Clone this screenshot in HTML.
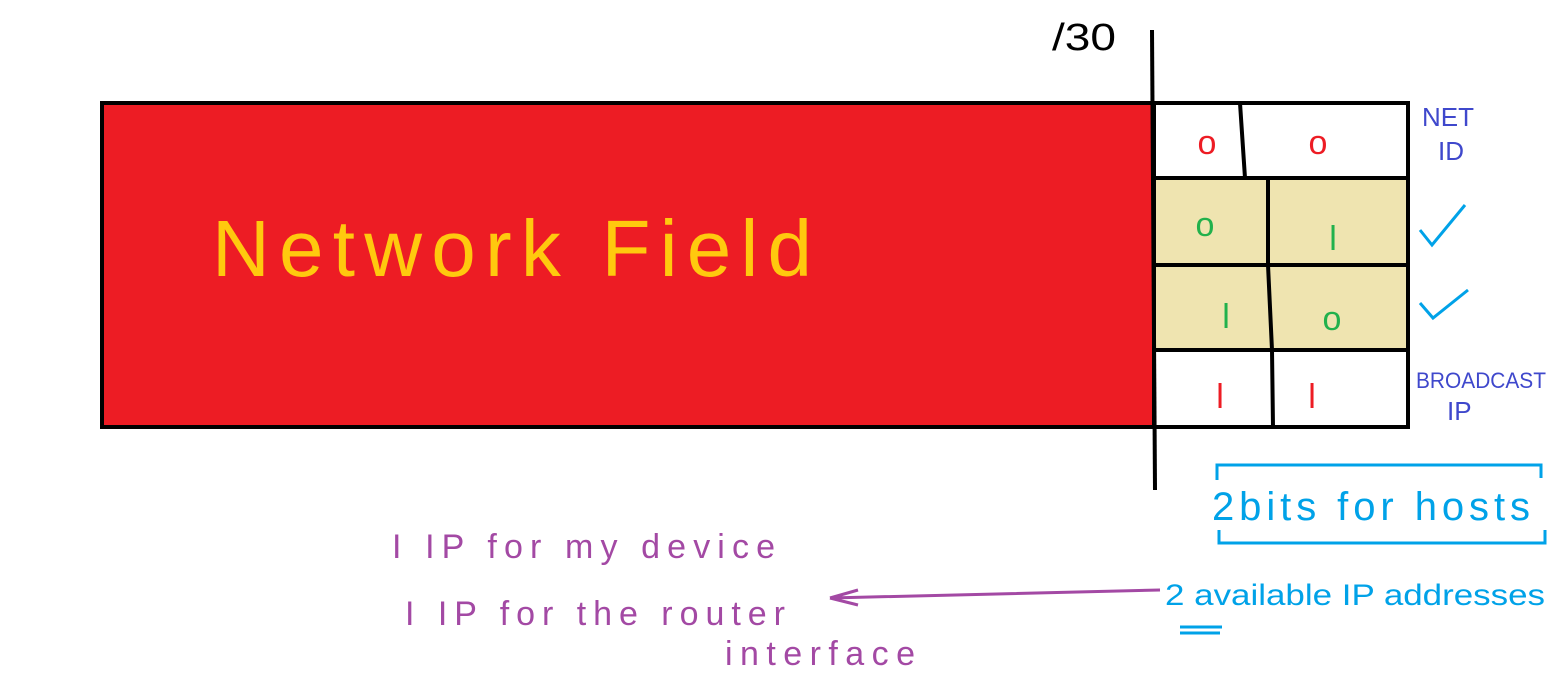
<!DOCTYPE html>
<html><head><meta charset="utf-8"><style>
html,body{margin:0;padding:0;background:#fff;width:1567px;height:691px;overflow:hidden}
svg{display:block}
text{font-family:"Liberation Sans",sans-serif}
</style></head><body>
<svg width="1567" height="691" viewBox="0 0 1567 691" xmlns="http://www.w3.org/2000/svg">
<rect x="102" y="103" width="1052" height="324" fill="#ed1c24" stroke="#000" stroke-width="4"/>
<rect x="1154" y="178" width="254" height="172" fill="#efe4b0"/>
<rect x="1154" y="103" width="254" height="324" fill="none" stroke="#000" stroke-width="4"/>
<path d="M1154 178 H1408 M1154 265 H1408 M1154 350 H1408 M1240 103 L1245 178 M1268 178 L1268 265 L1272 350 L1273 427" stroke="#000" stroke-width="4" fill="none"/>
<path d="M1152 30 L1155 490" stroke="#000" stroke-width="4"/>
<text x="1052" y="50" font-size="38" fill="#000" textLength="64" lengthAdjust="spacingAndGlyphs">/30</text>
<text x="212" y="276" font-size="80" fill="#ffc90e" textLength="600" lengthAdjust="spacing">Network Field</text>
<g font-size="34" text-anchor="middle">
<text x="1207" y="154" fill="#ed1c24">o</text>
<text x="1318" y="154" fill="#ed1c24">o</text>
<text x="1205" y="236" fill="#22b14c">o</text>
<text x="1333" y="250" fill="#22b14c">l</text>
<text x="1226" y="328" fill="#22b14c">l</text>
<text x="1332" y="330" fill="#22b14c">o</text>
<text x="1220" y="408" fill="#ed1c24">l</text>
<text x="1312" y="408" fill="#ed1c24">l</text>
</g>
<g fill="#3f48cc" font-size="26">
<text x="1422" y="126">NET</text>
<text x="1438" y="160">ID</text>
<text x="1416" y="388" font-size="22" textLength="130" lengthAdjust="spacingAndGlyphs">BROADCAST</text>
<text x="1447" y="420">IP</text>
</g>
<path d="M1420 230 L1432 245 L1465 205 M1420 303 L1433 318 L1468 290" stroke="#00a2e8" stroke-width="3" fill="none"/>
<path d="M1217 480 V465 H1541 V478 M1219 530 V543 H1545 V530" stroke="#00a2e8" stroke-width="3" fill="none"/>
<text x="1212" y="520" font-size="40" fill="#00a2e8" textLength="318" lengthAdjust="spacing">2bits for hosts</text>
<text x="1165" y="605" font-size="30" fill="#00a2e8" textLength="380" lengthAdjust="spacingAndGlyphs">2 available IP addresses</text>
<path d="M1180 627 H1222 M1180 633 H1220" stroke="#00a2e8" stroke-width="3"/>
<g fill="#a349a4" font-size="34">
<text x="392" y="558" textLength="383" lengthAdjust="spacing">I IP for my device</text>
<text x="405" y="625" textLength="380" lengthAdjust="spacing">I IP for the router</text>
<text x="725" y="665" textLength="190" lengthAdjust="spacing">interface</text>
</g>
<path d="M1160 590 L830 598 M830 598 L858 590 M830 598 L858 605" stroke="#a349a4" stroke-width="3" fill="none"/>
</svg>
</body></html>
